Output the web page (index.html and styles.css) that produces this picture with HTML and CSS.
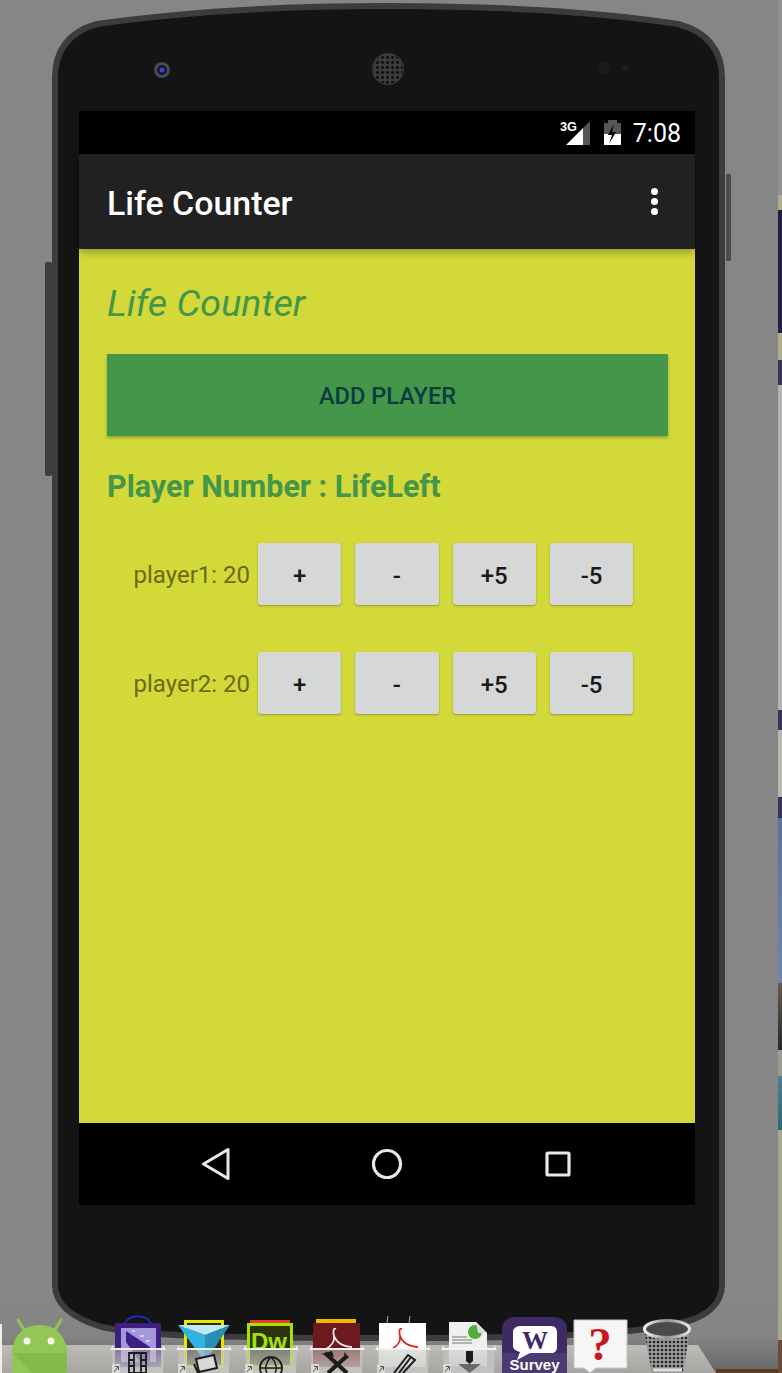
FILE: index.html
```html
<!DOCTYPE html>
<html lang="en">
<head>
  <meta charset="UTF-8">
  <meta name="viewport" content="width=device-width, initial-scale=1.0">
  <title>Life Counter</title>
  <link rel="stylesheet" href="styles.css">
</head>
<body>

<!-- Strip of the desktop wallpaper showing past the emulator window -->
<div class="wallpaper-strip"></div>

<!-- Emulator skin -->
<svg class="skin" width="782" height="1373" viewBox="0 0 782 1373">
  <defs>
    <pattern id="grille" width="5" height="5" patternUnits="userSpaceOnUse">
      <circle cx="2.5" cy="2.5" r="1.4" fill="#0c0c0c"/>
    </pattern>
    <linearGradient id="floor" x1="0" y1="0" x2="0" y2="1">
      <stop offset="0" stop-color="#868686"/>
      <stop offset="0.5" stop-color="#848484"/>
      <stop offset="1" stop-color="#666"/>
    </linearGradient>
  </defs>
  <rect class="floor" x="0" y="1300" width="778" height="73"/>
  <rect x="45" y="262" width="7" height="214" rx="2" fill="#3d3d3d"/>
  <rect x="726" y="174" width="5" height="87" rx="1" fill="#4c4c4c"/>
  <path class="body" d="M55 78 C55 47 72 31 97 24 C200 9 300 6 388 6 C480 6 580 9 678 24 C704 31 722 47 722 78 L722 1285 C722 1304 706 1316 688 1321 C640 1334 560 1338 388 1338 C220 1338 140 1336 102 1327 C72 1318 55 1304 55 1285 Z"/>
  <circle cx="162" cy="70" r="8" fill="#4b4b4b"/>
  <circle cx="162" cy="70" r="5" fill="#14143c"/>
  <circle cx="162" cy="70" r="2.5" fill="#3a48c0"/>
  <circle cx="388" cy="69" r="16" fill="#3b3b3b"/>
  <circle cx="388" cy="69" r="15" fill="url(#grille)"/>
  <circle cx="604" cy="68" r="6" fill="#1d1a1a"/>
  <circle cx="625" cy="68" r="3" fill="#201c1c"/>
</svg>

<div class="screen">
  <div class="status-bar">
    <svg class="status-icons" width="62" height="28" viewBox="0 0 62 28">
      <text class="net-label" x="1" y="12" textLength="17" lengthAdjust="spacingAndGlyphs">3G</text>
      <path d="M7 26 L24 9 V26 Z" fill="#fff"/>
      <path d="M24 9 L31 2 V26 H24 Z" fill="#555"/>
      <path d="M49 4 V1 H58 V4 H62 V15 H45 V4 Z" fill="#555"/>
      <rect x="45" y="15" width="17" height="11" fill="#fff"/>
      <path d="M55 5 L49 16 H53 L50 25 L57 13 H53 Z" fill="#000"/>
    </svg>
    <span class="clock">7:08</span>
  </div>

  <div class="toolbar">
    <span class="toolbar-title">Life Counter</span>
    <div class="overflow-menu">
      <span class="dot"></span>
      <span class="dot"></span>
      <span class="dot"></span>
    </div>
  </div>

  <div class="content">
    <h1 class="app-heading">Life Counter</h1>
    <button class="add-player">ADD PLAYER</button>
    <h2 class="list-heading">Player Number : LifeLeft</h2>

    <div class="player-row">
      <span class="player-label">player1: 20</span>
      <button class="life-button">+</button>
      <button class="life-button">-</button>
      <button class="life-button">+5</button>
      <button class="life-button">-5</button>
    </div>
    <div class="player-row">
      <span class="player-label">player2: 20</span>
      <button class="life-button">+</button>
      <button class="life-button">-</button>
      <button class="life-button">+5</button>
      <button class="life-button">-5</button>
    </div>
  </div>

  <div class="nav-bar">
    <svg width="30" height="34" viewBox="0 0 30 34"><path d="M27 2.500 V31.500 L2.500 17 Z" fill="none" stroke="#e8e8e8" stroke-width="3" stroke-linejoin="round"/></svg>
    <svg width="32" height="32" viewBox="0 0 32 32"><circle cx="16" cy="16" r="13.500" fill="none" stroke="#e8e8e8" stroke-width="3.200"/></svg>
    <svg class="nav-recents" width="28" height="28" viewBox="0 0 28 28"><rect x="3" y="3" width="22" height="22" rx="1" fill="none" stroke="#e8e8e8" stroke-width="3.200"/></svg>
  </div>
</div>

<!-- Desktop dock in front of the emulator -->
<svg class="dock" width="782" height="60" viewBox="0 1313 782 60">
  <defs>
    <linearGradient id="shelfFill" x1="0" y1="0" x2="0" y2="1">
      <stop offset="0" stop-color="#bcbbb8"/>
      <stop offset="1" stop-color="#a6a5a2"/>
    </linearGradient>
    <linearGradient id="glassFill" x1="0" y1="0" x2="0" y2="1">
      <stop offset="0" stop-color="#c6c6c4" stop-opacity="0.55"/>
      <stop offset="1" stop-color="#c8c8c6" stop-opacity="0.85"/>
    </linearGradient>
    <linearGradient id="rimFill" x1="0" y1="0" x2="1" y2="0">
      <stop offset="0" stop-color="#f4f4f4"/>
      <stop offset="0.5" stop-color="#8e8e8e"/>
      <stop offset="1" stop-color="#e4e4e4"/>
    </linearGradient>
    <pattern id="mesh" width="4" height="4" patternUnits="userSpaceOnUse">
      <rect width="4" height="4" fill="#9a9a9a"/>
      <circle cx="2" cy="2" r="1.300" fill="#232323"/>
    </pattern>
    <!-- one glass stack box, drawn at x = 0 -->
    <g id="stackBox">
      <path d="M2 1350 H54 L53 1373 H3 Z" fill="url(#glassFill)"/>
      <path d="M0 1350 L3 1345 V1348 H53 V1345 L56 1350 Z" fill="#f2f2f2"/>
      <rect x="2" y="1364" width="8" height="9" fill="#d8d8d6"/>
      <path d="M4 1372 L8 1367 M5 1366.500 H8.500 V1370" fill="none" stroke="#555" stroke-width="1"/>
    </g>
  </defs>

  <path d="M0 1345 H698 L716 1373 H0 Z" fill="url(#shelfFill)"/>
  <rect x="716" y="1369" width="62" height="4" fill="#5a3a24"/>
  <rect x="0" y="1324" width="2" height="49" fill="#eee"/>

  <!-- android -->
  <path d="M18 1320 L26 1333 M61 1320 L53 1333" stroke="#92c755" stroke-width="3" stroke-linecap="round"/>
  <path d="M12 1354 C12 1336 24 1325 39.500 1325 C55 1325 67 1336 67 1354 V1373 H12 Z" fill="#92c755"/>
  <path d="M12 1353 H67 V1373 H32 Z" fill="#84ba4c"/>
  <circle cx="27" cy="1341" r="3.500" fill="#f3f7ea"/>
  <circle cx="51" cy="1341" r="3.500" fill="#f3f7ea"/>

  <!-- media encoder -->
  <path d="M125 1323 C130 1314 146 1314 151 1323" fill="none" stroke="#1a2fb0" stroke-width="2"/>
  <rect x="115" y="1323" width="46" height="44" fill="#3f2080"/>
  <rect x="121" y="1328" width="35" height="34" fill="#a597dc"/>
  <path d="M126 1331 L150 1347 L150 1362 H140 L126 1342 Z" fill="#3c1f80"/>
  <path d="M132 1331 L135 1331 M140 1336 L144 1336 M146 1341 L150 1341" stroke="#d8c8e4" stroke-width="2"/>
  <!-- bridge / photos -->
  <rect x="185.500" y="1321.500" width="37" height="45" fill="#2c2a12" stroke="#e6e600" stroke-width="3"/>
  <path d="M178 1325 L205 1335 V1362 Z" fill="#2fb4e2"/>
  <path d="M230 1325 L205 1335 V1362 Z" fill="#2a8eb2"/>
  <path d="M178 1325 H230 L205 1335 Z" fill="#bfe9f5"/>
  <!-- dreamweaver -->
  <rect x="250" y="1320" width="40" height="5" fill="#ea3a30"/>
  <rect x="248.500" y="1324.500" width="43" height="42" fill="#2a330c" stroke="#a4e400" stroke-width="3"/>
  <text class="dw" x="251" y="1350">Dw</text>
  <!-- acrobat pro -->
  <rect x="316" y="1319" width="40" height="5" fill="#f0b800"/>
  <rect x="313" y="1323" width="47" height="44" fill="#6c1a1e"/>
  <path d="M336 1329 C333 1327 333 1333 334 1336 C335 1342 331 1346 326 1349 M334 1336 C337 1343 342 1346 352 1347" fill="none" stroke="#f2e8e8" stroke-width="1.800"/>
  <!-- reader -->
  <path d="M387 1323 L388 1316 M409 1323 L410 1316" stroke="#aaa" stroke-width="1"/>
  <rect x="379" y="1323" width="47" height="44" fill="#fff"/>
  <path d="M402 1329 C399 1327 399 1333 400 1336 C401 1342 397 1346 392 1349 M400 1336 C403 1343 408 1346 418 1347" fill="none" stroke="#d8281f" stroke-width="1.800"/>
  <!-- installer doc -->
  <path d="M449 1322 H476 L487 1333 V1366 H449 Z" fill="#f0f0ee"/>
  <circle cx="475" cy="1332" r="7" fill="#4fae3c"/>
  <path d="M476 1322 L487 1333 H478 Z" fill="#dcdcd8"/>
  <path d="M452 1337 H467 M452 1340 H472 M452 1343 H472" stroke="#777" stroke-width="1"/>

  <!-- stacks -->
  <use href="#stackBox" x="110"/>
  <use href="#stackBox" x="176"/>
  <use href="#stackBox" x="243"/>
  <use href="#stackBox" x="309"/>
  <use href="#stackBox" x="375"/>
  <use href="#stackBox" x="441"/>

  <!-- stack glyphs -->
  <path d="M129 1353 H146 V1373 H129 Z M134 1353 V1373 M141 1353 V1373 M129 1360 H134 M129 1366 H134 M141 1360 H146 M141 1366 H146" fill="none" stroke="#1c1c1c" stroke-width="1.800"/>
  <path d="M196 1359 L214 1355 L217 1368 L199 1372 Z" fill="#d8d8d8" stroke="#1c1c1c" stroke-width="2"/>
  <path d="M194 1364 L198 1373" stroke="#1c1c1c" stroke-width="2"/>
  <circle cx="271" cy="1368" r="11" fill="none" stroke="#1c1c1c" stroke-width="1.800"/>
  <path d="M260 1368 H282 M271 1357 C265 1363 265 1370 267 1373 M271 1357 C277 1363 277 1370 275 1373" fill="none" stroke="#1c1c1c" stroke-width="1.500"/>
  <path d="M325 1353 L347 1373 M347 1356 L328 1373" stroke="#1c1c1c" stroke-width="4"/>
  <path d="M321 1354 L332 1351 L334 1357 Z M344 1352 L349 1357 L345 1360 Z" fill="#1c1c1c"/>
  <path d="M394 1373 L408 1355 L415 1360 L403 1373 M399 1373 L411 1357" fill="none" stroke="#1c1c1c" stroke-width="2"/>
  <path d="M466 1351 H473 V1361 L469.500 1364 L466 1361 Z" fill="#1c1c1c"/>
  <path d="M458 1364 H481 L469.500 1373 Z" fill="#6a6a6a"/>

  <!-- survey -->
  <rect x="502" y="1317" width="65" height="62" rx="12" fill="#3f2a66"/>
  <rect x="502" y="1353" width="65" height="26" fill="#4c3a72"/>
  <path d="M520 1326 H551 C555 1326 557 1329 557 1332 V1347 C557 1351 555 1353 551 1353 H530 L517 1360 L520 1352 C516 1351 513 1349 513 1346 V1332 C513 1329 516 1326 520 1326 Z" fill="#fff"/>
  <text class="survey-w" x="535" y="1349">W</text>
  <text class="survey-label" x="534.500" y="1369.500">Survey</text>

  <!-- help doc -->
  <path d="M574 1320 H627 V1368 H596 L590 1373 L584 1368 H574 Z" fill="#f6f6f6" stroke="#c4c4c4"/>
  <text class="help-mark" x="600" y="1360">?</text>

  <!-- trash -->
  <path d="M644 1329 L652 1373 H683 L690 1329 Z" fill="url(#mesh)"/>
  <ellipse cx="667" cy="1329" rx="22" ry="8" fill="#4a4a4a"/>
  <ellipse cx="667" cy="1329" rx="22.500" ry="8.500" fill="none" stroke="url(#rimFill)" stroke-width="3"/>
  <path d="M653 1370 H682" stroke="#ddd" stroke-width="3"/>
</svg>

</body>
</html>
```
FILE: styles.css
```css
/* Basic styles */
body {
  font-family: Roboto, "Liberation Sans", sans-serif;
  margin: 0;
  padding: 0;
  width: 782px;
  height: 1373px;
  overflow: hidden;
  position: relative;
  background: #868686;
}

.wallpaper-strip {
  position: absolute;
  top: 0;
  right: 0;
  width: 4px;
  height: 100%;
  background: linear-gradient(to bottom,
    #909090 0, #909090 195px,
    #b0ae88 195px, #b0ae88 210px,
    #2a1c4a 210px, #2a1c4a 333px,
    #b0ae88 333px, #b0ae88 360px,
    #3a2f5a 360px, #3a2f5a 385px,
    #b4b4b4 385px, #b4b4b4 710px,
    #3a2f5a 710px, #3a2f5a 730px,
    #b8b8b0 730px, #b8b8b0 797px,
    #3a2f5a 797px, #3a2f5a 818px,
    #5a72a5 818px, #6b86ad 983px,
    #6a5a48 983px, #1c2a30 1050px,
    #9c9a90 1050px, #9c9a90 1076px,
    #4a7f9c 1076px, #2a6a70 1130px,
    #a8a88a 1130px, #a8a88a 1340px,
    #6a4a34 1340px, #6a4a34 100%);
}

/* Emulator skin */
.skin {
  position: absolute;
  top: 0;
  left: 0;
}

.floor {
  fill: url(#floor);
}

.body {
  fill: #141414;
  stroke: #3c3c3c;
  stroke-width: 6;
}

/* Screen */
.screen {
  position: absolute;
  top: 111px;
  left: 79px;
  width: 616px;
  height: 1094px;
  display: flex;
  flex-direction: column;
}

.status-bar {
  height: 43px;
  background: #000;
  display: flex;
  justify-content: flex-end;
  align-items: center;
  padding: 2px 14px 0 0;
  box-sizing: border-box;
}

.status-icons {
  margin: -2px 12px 0 0;
}

.net-label {
  font-family: "Liberation Sans", sans-serif;
  font-size: 13px;
  font-weight: bold;
  fill: #fff;
}

.clock {
  font-size: 25px;
  color: #fff;
}

.toolbar {
  height: 95px;
  background: #212121;
  display: flex;
  align-items: center;
  justify-content: space-between;
  padding: 0 37px 0 28px;
  box-shadow: 0 3px 8px rgba(0, 0, 0, 0.3);
  z-index: 1;
}

.toolbar-title {
  margin-top: 3px;
  font-size: 33.900px;
  font-weight: 500;
  color: #fff;
}

.overflow-menu {
  display: flex;
  flex-direction: column;
  gap: 3px;
}

.dot {
  width: 7px;
  height: 7px;
  border-radius: 50%;
  background: #fff;
}

/* Main content */
.content {
  flex: 1;
  background: #d3d939;
  padding: 0 27px 0 28px;
}

.app-heading {
  margin: 30px 0 0;
  font-size: 37.700px;
  line-height: 48px;
  font-weight: 400;
  font-style: italic;
  color: #43964a;
}

.add-player {
  display: block;
  width: 561px;
  height: 82px;
  margin-top: 27px;
  padding: 2px 0 0;
  border: none;
  background: #43964a;
  color: #0d3b3f;
  font-family: inherit;
  font-size: 23.600px;
  font-weight: 500;
  box-shadow: 0 2px 3px rgba(0, 0, 0, 0.25);
}

.list-heading {
  margin: 31px 0 0;
  font-size: 30.500px;
  line-height: 40px;
  font-weight: 700;
  color: #43964a;
}

.player-row {
  display: flex;
  align-items: center;
  gap: 14px;
  height: 62px;
  margin-top: 47px;
}

.list-heading + .player-row {
  margin-top: 36px;
}

.player-label {
  width: 143px;
  margin-right: -6px;
  padding-top: 2px;
  text-align: right;
  font-size: 24px;
  color: #6b6b12;
  white-space: nowrap;
}

.life-button {
  width: 83.300px;
  height: 62px;
  padding: 3px 0 0;
  border: none;
  border-radius: 3px;
  background: #d6d7d7;
  color: #1a1a1a;
  font-family: inherit;
  font-size: 24px;
  font-weight: 500;
  box-shadow: 0 1px 2px rgba(0, 0, 0, 0.3);
}

/* Navigation bar */
.nav-bar {
  height: 82px;
  padding-right: 1px;
  background: #000;
  display: flex;
  align-items: center;
  justify-content: center;
  gap: 140px;
}

.nav-recents {
  margin-left: 1px;
}

/* Dock */
.dock {
  position: absolute;
  left: 0;
  bottom: 0;
}

.dw {
  font-family: "Liberation Sans", sans-serif;
  font-size: 24px;
  font-weight: bold;
  fill: #a4e400;
}

.survey-w {
  font-family: "Liberation Serif", serif;
  font-size: 26px;
  font-weight: bold;
  fill: #3f2a66;
  text-anchor: middle;
}

.survey-label {
  font-family: "Liberation Sans", sans-serif;
  font-size: 15px;
  font-weight: bold;
  fill: #fff;
  text-anchor: middle;
}

.help-mark {
  font-family: "Liberation Serif", serif;
  font-size: 47px;
  font-weight: bold;
  fill: #c8161c;
  text-anchor: middle;
}
```
